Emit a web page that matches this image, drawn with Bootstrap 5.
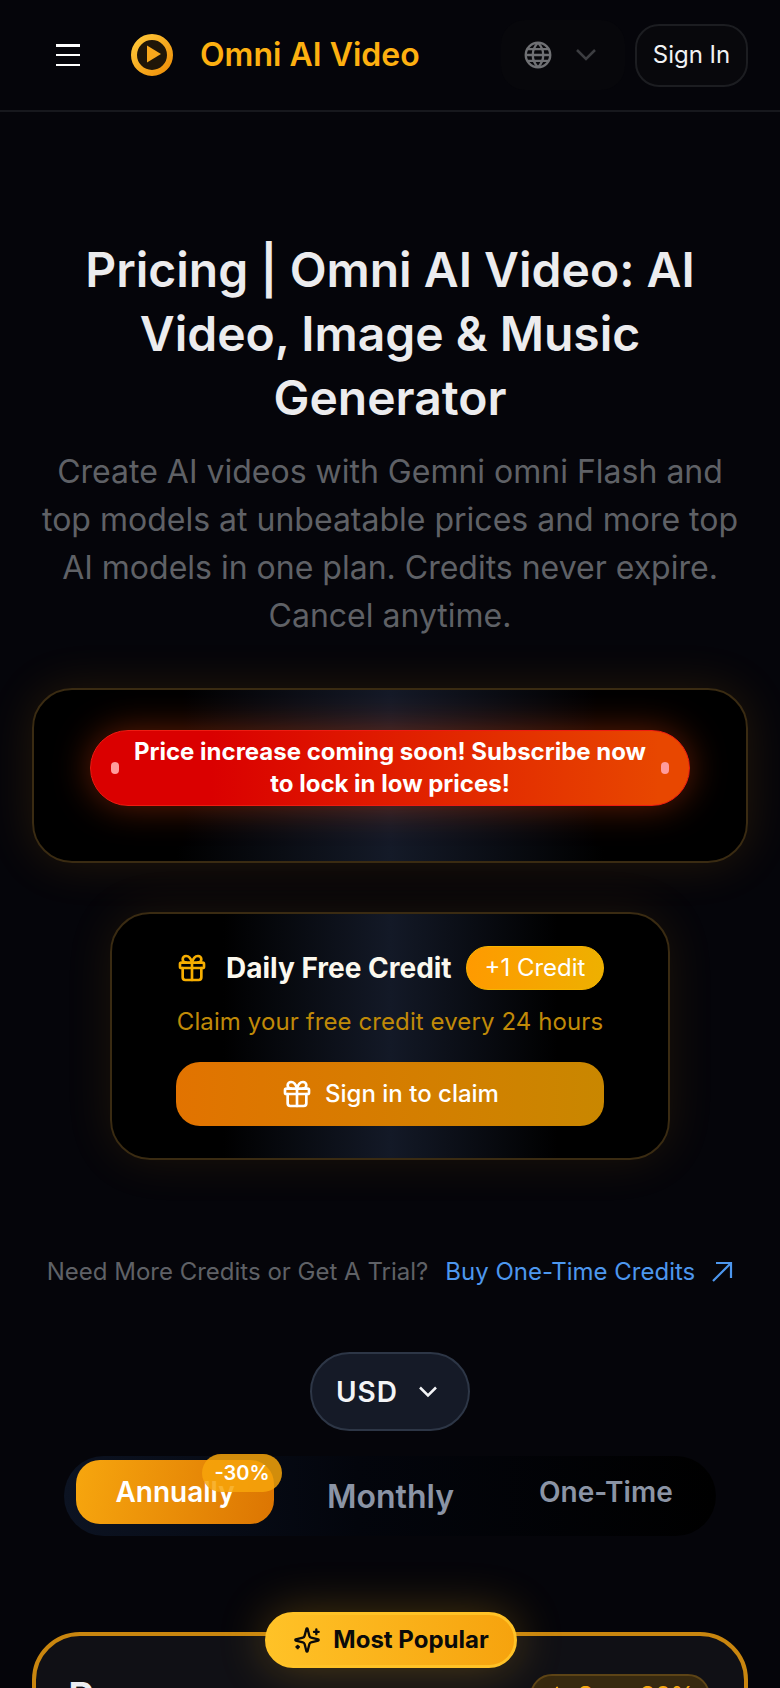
<!DOCTYPE html>
<html lang="en">
<head>
  <meta charset="UTF-8">
  <meta name="viewport" content="width=device-width, initial-scale=1.0">
  <title>Pricing | Omni AI Video</title>
  <link href="https://cdn.jsdelivr.net/npm/bootstrap@5.3.0/dist/css/bootstrap.min.css" rel="stylesheet">
  <style>
    html, body {
      background-color: #05050a;
      font-family: Inter, "Liberation Sans", sans-serif;
    }
    .page-clip {
      height: 1688px;
      overflow: hidden;
    }
    .top-bar {
      height: 112px;
      padding: 0 32px 0 56px;
      border-bottom: 2px solid #17181d;
    }
    .menu-btn {
      width: 24px;
      height: 22px;
      display: flex;
      flex-direction: column;
      justify-content: space-between;
      margin-right: 51px;
    }
    .menu-btn span {
      display: block;
      height: 2.5px;
      background: #fff;
    }
    .logo-text {
      margin-left: 27px;
      font-size: 32px;
      font-weight: 600;
      color: #fdb010;
    }
    .lang-box {
      width: 124px;
      height: 70px;
      margin-right: 10px;
      padding-left: 23px;
      gap: 24px;
      border-radius: 24px;
      background: #07070b;
    }
    .sign-btn {
      width: 113px;
      height: 63px;
      padding: 0;
      font-size: 24px;
      color: #f1f2f4;
      background: #08080c;
      border: 2px solid #1c1d21;
      border-radius: 24px;
    }
    .hero {
      padding: 126px 32px 0;
    }
    .hero-title {
      margin: 0;
      font-size: 48px;
      line-height: 64px;
      font-weight: 600;
      color: #ececee;
    }
    .hero-sub {
      margin: 18px 0 0;
      font-size: 32px;
      line-height: 48px;
      color: #5f6166;
    }
    .notice-box {
      height: 175px;
      margin: 48px 32px 0;
      padding-top: 40px;
      border: 2px solid #3a2b12;
      border-radius: 40px;
      background: linear-gradient(90deg, #000 20%, #141a28 50%, #000 80%);
      box-shadow: 0 0 48px rgba(245, 158, 11, .13);
    }
    .notice-pill {
      height: 76px;
      margin: 0 56px;
      padding: 0 20px;
      gap: 12px;
      font-size: 24px;
      line-height: 32px;
      font-weight: 700;
      color: #fff;
      text-align: center;
      border: 1px solid #ee1c12;
      border-radius: 38px;
      background: linear-gradient(90deg, #da0000 20%, #e84700 95%);
      box-shadow: 0 0 36px rgba(240, 70, 10, .42);
    }
    .notice-dot {
      flex: none;
      width: 8px;
      height: 12px;
      border-radius: 4px;
      background: #ff9c9c;
    }
    .daily-box {
      width: 560px;
      height: 248px;
      margin: 49px auto 0;
      padding: 32px 64px 0;
      border: 2px solid #3a2b12;
      border-radius: 40px;
      background: linear-gradient(90deg, #000 20%, #131927 50%, #000 80%);
      box-shadow: 0 0 48px rgba(245, 158, 11, .1);
    }
    .daily-title {
      flex: none;
      font-size: 28px;
      font-weight: 700;
      color: #fbf8ee;
      margin: 0 auto 0 18px;
      white-space: nowrap;
    }
    .credit-chip {
      flex: none;
      width: 138px;
      height: 44px;
      font-size: 24px;
      color: #fff;
      border: 1px solid #f7b500;
      border-radius: 22px;
      background: linear-gradient(90deg, #ff9a00, #eeb000);
    }
    .daily-text {
      margin: 14px 0 0;
      font-size: 24px;
      line-height: 36px;
      letter-spacing: .1px;
      color: #c08a08;
      white-space: nowrap;
      text-align: center;
    }
    .claim-btn {
      width: 428px;
      height: 64px;
      margin-top: 22px;
      gap: 12px;
      font-size: 24px;
      font-weight: 500;
      color: #fff;
      border: 0;
      border-radius: 24px;
      background: linear-gradient(90deg, #e27300, #c98700);
    }
    .trial-row {
      margin-top: 94px;
      font-size: 24px;
      line-height: 36px;
      color: #5f6166;
    }
    .trial-link {
      margin-left: 17px;
      color: #4d97ee;
      text-decoration: none;
    }
    .usd-btn {
      width: 160px;
      height: 79px;
      margin-top: 62px;
      padding: 0 0 0 24px;
      gap: 20px;
      font-size: 28px;
      font-weight: 600;
      letter-spacing: 1px;
      color: #f3f4f6;
      background: #151a27;
      border: 2px solid #2d3646;
      border-radius: 40px;
    }
    .period-bar {
      position: relative;
      width: 652px;
      height: 80px;
      margin: 25px auto 0;
      padding: 4px 12px;
      border-radius: 40px;
      background: linear-gradient(90deg, #0c1322, #03050c 45%, #000);
    }
    .period-on {
      position: relative;
      width: 198px;
      height: 64px;
      font-size: 28px;
      font-weight: 600;
      color: #fff;
      border-radius: 24px;
      background: linear-gradient(100deg, #f7a60e, #dc7502);
    }
    .off-badge {
      position: absolute;
      top: -6px;
      left: 126px;
      width: 80px;
      height: 38px;
      font-size: 20px;
      font-weight: 600;
      border-radius: 19px;
      background: rgba(247, 165, 10, .85);
    }
    .period-mid {
      margin-left: 53px;
      margin-top: 13px;
      font-size: 32px;
      font-weight: 600;
      color: #8b94a5;
    }
    .period-end {
      margin-left: 85px;
      margin-top: 11px;
      font-size: 28px;
      font-weight: 600;
      color: #8b94a5;
    }
    .plan-wrap {
      position: relative;
      margin: 96px 32px 0;
    }
    .plan-box {
      height: 300px;
      padding: 37px 34px 34px 32px;
      border: 4px solid #c9860f;
      border-radius: 48px;
      background: #101015;
    }
    .plan-name {
      font-size: 40px;
      font-weight: 600;
      line-height: 48px;
      color: #eceef2;
    }
    .save-chip {
      width: 180px;
      height: 44px;
      margin-top: 1px;
      gap: 10px;
      font-size: 24px;
      font-weight: 500;
      color: #f6a90f;
      border: 2px solid #5d4416;
      border-radius: 22px;
      background: #37290f;
    }
    .popular-badge {
      position: absolute;
      top: -20px;
      left: 233px;
      width: 252px;
      height: 56px;
      gap: 12px;
      font-size: 24px;
      font-weight: 700;
      color: #0a0a0a;
      border: 3px solid #ffc227;
      border-radius: 28px;
      background: linear-gradient(90deg, #ffc227, #f6a30e);
      box-shadow: 0 0 48px rgba(250, 180, 30, .28);
    }
  </style>
</head>
<body>

<div class="page-clip">
  <nav class="top-bar d-flex align-items-center">
    <div class="menu-btn"><span></span><span></span><span></span></div>
    <svg width="42" height="42" viewBox="0 0 42 42">
      <defs>
        <linearGradient id="ringGold" x1="0" y1="0" x2="1" y2="1">
          <stop offset="0" stop-color="#ffc83a"/>
          <stop offset="1" stop-color="#ee8f08"/>
        </linearGradient>
      </defs>
      <circle cx="21" cy="21" r="18" fill="#1f1608" stroke="url(#ringGold)" stroke-width="6"/>
      <path d="M16 11.500 30 20 16 28.500z" fill="#f9a81b"/>
    </svg>
    <span class="logo-text">Omni AI Video</span>
    <div class="lang-box d-flex align-items-center ms-auto">
      <svg width="28" height="28" viewBox="0 0 24 24" fill="none" stroke="#6f7074" stroke-width="2">
        <circle cx="12" cy="12" r="10.500"/>
        <path d="M1.500 12h21M3 7h18M3 17h18M12 1.500c-6 6-6 15 0 21M12 1.500c6 6 6 15 0 21"/>
      </svg>
      <svg width="20" height="12" viewBox="0 0 20 12" fill="none" stroke="#3c3d41" stroke-width="2.500">
        <path d="m1 1 9 9 9-9"/>
      </svg>
    </div>
    <button class="btn sign-btn">Sign In</button>
  </nav>

  <div class="hero text-center">
    <h1 class="hero-title">Pricing | Omni AI Video: AI Video, Image &amp; Music Generator</h1>
    <p class="hero-sub">Create AI videos with Gemni omni Flash and top models at unbeatable prices and more top AI models in one plan. Credits never expire. Cancel anytime.</p>
  </div>

  <div class="notice-box">
    <div class="notice-pill d-flex align-items-center">
      <span class="notice-dot"></span>
      <span>Price increase coming soon! Subscribe now to lock in low prices!</span>
      <span class="notice-dot"></span>
    </div>
  </div>

  <div class="daily-box">
    <div class="d-flex align-items-center">
      <svg width="32" height="32" viewBox="0 0 24 24" fill="none" stroke="#f7ae00" stroke-width="2" stroke-linecap="round" stroke-linejoin="round">
        <rect x="3" y="8" width="18" height="4" rx="1"/>
        <path d="M12 8v13"/>
        <path d="M19 12v7a2 2 0 0 1-2 2H7a2 2 0 0 1-2-2v-7"/>
        <path d="M7.500 8a2.500 2.500 0 0 1 0-5A4.800 8 0 0 1 12 8a4.800 8 0 0 1 4.500-5 2.500 2.500 0 0 1 0 5"/>
      </svg>
      <span class="daily-title">Daily Free Credit</span>
      <span class="credit-chip d-flex align-items-center justify-content-center">+1 Credit</span>
    </div>
    <p class="daily-text">Claim your free credit every 24 hours</p>
    <button class="btn claim-btn d-flex align-items-center justify-content-center">
      <svg width="32" height="32" viewBox="0 0 24 24" fill="none" stroke="#fff" stroke-width="2" stroke-linecap="round" stroke-linejoin="round">
        <rect x="3" y="8" width="18" height="4" rx="1"/>
        <path d="M12 8v13"/>
        <path d="M19 12v7a2 2 0 0 1-2 2H7a2 2 0 0 1-2-2v-7"/>
        <path d="M7.500 8a2.500 2.500 0 0 1 0-5A4.800 8 0 0 1 12 8a4.800 8 0 0 1 4.500-5 2.500 2.500 0 0 1 0 5"/>
      </svg>
      Sign in to claim
    </button>
  </div>

  <div class="trial-row d-flex align-items-center justify-content-center">
    <span>Need More Credits or Get A Trial?</span>
    <a href="#" class="trial-link d-flex align-items-center gap-3">Buy One-Time Credits
      <svg width="22" height="22" viewBox="0 0 22 22" fill="none" stroke="#4d97ee" stroke-width="2.200">
        <path d="M2 20 20 2M5 2h15v15"/>
      </svg>
    </a>
  </div>

  <div class="d-flex justify-content-center">
    <button class="btn usd-btn d-flex align-items-center">USD
      <svg width="20" height="12" viewBox="0 0 20 12" fill="none" stroke="#f3f4f6" stroke-width="2.500">
        <path d="m2 1.500 8 8 8-8"/>
      </svg>
    </button>
  </div>

  <div class="period-bar d-flex align-items-start">
    <div class="period-on d-flex align-items-center justify-content-center">
      Annually
      <span class="off-badge d-flex align-items-center justify-content-center">-30%</span>
    </div>
    <span class="period-mid">Monthly</span>
    <span class="period-end">One-Time</span>
  </div>

  <div class="plan-wrap">
    <div class="plan-box">
      <div class="d-flex justify-content-between align-items-start">
        <span class="plan-name">Pro</span>
        <span class="save-chip d-flex align-items-center justify-content-center">
          <svg width="22" height="26" viewBox="0 0 24 24" fill="none" stroke="#f6a90f" stroke-width="2.500" stroke-linecap="round" stroke-linejoin="round">
            <path d="M12 3q1 5-3 8-4 3-3 7t6 4q5 0 6-5 0-4-3-6"/>
          </svg>
          Save 30%
        </span>
      </div>
    </div>
    <div class="popular-badge d-flex align-items-center justify-content-center">
      <svg width="28" height="28" viewBox="0 0 24 24" fill="none" stroke="#0a0a0a" stroke-width="2" stroke-linecap="round" stroke-linejoin="round">
        <path d="M9.937 15.500A2 2 0 0 0 8.500 14.063l-6.135-1.582a.5.500 0 0 1 0-.962L8.500 9.936A2 2 0 0 0 9.937 8.500l1.582-6.135a.5.500 0 0 1 .963 0L14.063 8.500A2 2 0 0 0 15.500 9.937l6.135 1.581a.5.500 0 0 1 0 .964L15.500 14.063a2 2 0 0 0-1.437 1.437l-1.582 6.135a.5.500 0 0 1-.963 0z"/>
        <path d="M20 3v4M22 5h-4M4 17v2M5 18H3"/>
      </svg>
      Most Popular
    </div>
  </div>
</div>

</body>
</html>
